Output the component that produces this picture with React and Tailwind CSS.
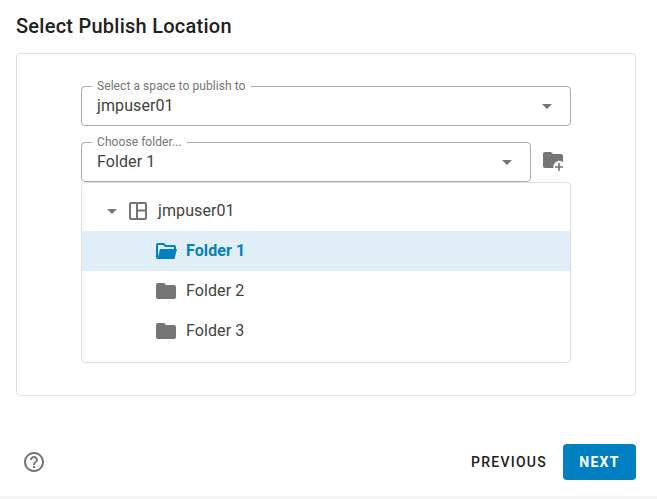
import React from 'react';

const Caret = ({ className }) => (
  <svg className={className} width="10" height="5" viewBox="0 0 10 5" fill="currentColor">
    <path d="M0 0l5 5 5-5z" />
  </svg>
);

const FolderIcon = () => (
  <svg width="24" height="24" viewBox="0 0 24 24" fill="#757575">
    <path d="M10 4H4c-1.1 0-1.99.9-1.99 2L2 18c0 1.1.9 2 2 2h16c1.1 0 2-.9 2-2V8c0-1.1-.9-2-2-2h-8l-2-2z" />
  </svg>
);

const FolderOpenIcon = () => (
  <svg width="24" height="24" viewBox="0 0 24 24" fill="#0080c0">
    <path d="M10 4H4C2.900 4 2 4.900 2 6v12c0 1.100.9 2 2 2V6h5.200l2 2H20v2h2V8c0-1.100-.9-2-2-2h-8z" />
    <path d="M6 10h17l-2.500 10H3.500z" />
  </svg>
);

const AddFolderIcon = () => (
  <svg width="24" height="24" viewBox="0 0 24 24" fill="#757575">
    <path d="M10 4H4c-1.100 0-2 .9-2 2v12c0 1.100.9 2 2 2h8.500A5.900 5.900 0 0 1 22 14.200V8c0-1.100-.9-2-2-2h-8l-2-2z" />
    <path d="M17.200 15h1.600v3.200H22v1.600h-3.200V23h-1.600v-3.200H14v-1.600h3.200z" />
  </svg>
);

const SpaceIcon = () => (
  <svg width="20" height="20" viewBox="0 0 20 20" fill="none" stroke="#757575" strokeWidth="2">
    <rect x="2" y="2" width="16" height="16" rx="1" />
    <path d="M9 2v16M9 9.500h9" />
  </svg>
);

const HelpIcon = () => (
  <svg width="24" height="24" viewBox="0 0 24 24" fill="#757575">
    <path d="M11 18h2v-2h-2v2zm1-16C6.480 2 2 6.480 2 12s4.480 10 10 10 10-4.480 10-10S17.520 2 12 2zm0 18c-4.410 0-8-3.590-8-8s3.590-8 8-8 8 3.590 8 8-3.590 8-8 8zm0-14c-2.210 0-4 1.790-4 4h2c0-1.100.9-2 2-2s2 .9 2 2c0 2-3 1.750-3 5h2c0-2.250 3-2.500 3-5 0-2.210-1.790-4-4-4z" />
  </svg>
);

const SelectField = ({ label, value, className }) => (
  <fieldset className={`h-[46px] border border-[#ababab] rounded pl-[10px] pr-[18px] ${className}`}>
    <legend className="px-[5px] h-[12px] text-[12px] leading-[12px] tracking-[0.07px] text-[#757575]">{label}</legend>
    <div className="flex items-center justify-between h-[32px] pl-[5px] pb-[4px]">
      <span className="text-[16px] tracking-[0.1px] text-[#424242]">{value}</span>
      <Caret className="text-[#757575]" />
    </div>
  </fieldset>
);

const FolderRow = ({ name, selected }) => (
  <div className={`flex items-center h-[40px] pl-[72px] gap-[8px] ${selected ? 'bg-[#e0eef7]' : ''}`}>
    {selected ? <FolderOpenIcon /> : <FolderIcon />}
    <span className={`text-[16px] tracking-[0.1px] ${selected ? 'font-bold text-[#0080c0]' : 'text-[#424242]'}`}>{name}</span>
  </div>
);

const App = () => {
  return (
    <div className="w-[657px] h-[499px] bg-[#f5f5f5] font-['Roboto',sans-serif] overflow-hidden">
      <div className="h-[496px] bg-white pl-[16px] pr-[21px] flex flex-col">
        <h1 className="h-[53px] pt-[13px] text-[20px] leading-[26px] tracking-[0.25px] font-medium text-[#212121]">Select Publish Location</h1>

        <div className="h-[343px] border border-[#e0e0e0] rounded pt-[26px] pl-[64px]">
          <div className="w-[490px]">
            <SelectField label="Select a space to publish to" value="jmpuser01" className="w-[490px]" />
            <div className="flex items-start mt-[10px]">
              <SelectField label="Choose folder..." value="Folder 1" className="w-[450px]" />
              <div className="ml-[10px] mt-[12px]">
                <AddFolderIcon />
              </div>
            </div>
            <div className="h-[181px] border border-[#e0e0e0] rounded pt-[8px]">
              <div className="flex items-center h-[40px] pl-[25px]">
                <Caret className="text-[#757575]" />
                <div className="ml-[11px]">
                  <SpaceIcon />
                </div>
                <span className="ml-[10px] text-[16px] tracking-[0.1px] text-[#424242]">jmpuser01</span>
              </div>
              <FolderRow name="Folder 1" selected />
              <FolderRow name="Folder 2" />
              <FolderRow name="Folder 3" />
            </div>
          </div>
        </div>

        <div className="flex items-center justify-between mt-[48px]">
          <div className="ml-[6px]">
            <HelpIcon />
          </div>
          <div className="flex items-center">
            <button className="text-[14px] font-medium tracking-[1.25px] text-[#212121] mr-[16px]">PREVIOUS</button>
            <button className="w-[73px] h-[36px] rounded bg-[#0080c0] text-white text-[14px] font-bold tracking-[1.25px]">NEXT</button>
          </div>
        </div>
      </div>
    </div>
  );
};

export default App;
